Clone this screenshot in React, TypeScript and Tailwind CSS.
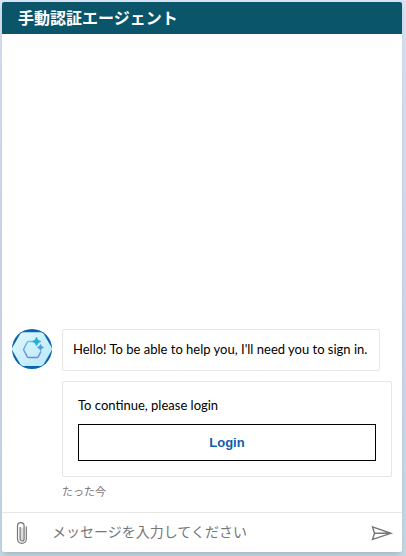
import React from "react";

function BotAvatar() {
  return (
    <svg className="size-10 shrink-0" viewBox="0 0 40 40" role="img" aria-label="Agent">
      <defs>
        <linearGradient id="hexFill" x1="0" y1="0" x2="1" y2="1">
          <stop offset="0" stopColor="#e2f7fd" />
          <stop offset="1" stopColor="#b5e9f8" />
        </linearGradient>
        <linearGradient id="hexLine" x1="0" y1="0" x2="0" y2="1">
          <stop offset="0" stopColor="#5cc8ea" />
          <stop offset="1" stopColor="#7f7fdc" />
        </linearGradient>
        <clipPath id="disc">
          <circle cx="20" cy="20" r="20" />
        </clipPath>
      </defs>
      <g clipPath="url(#disc)">
        <rect width="40" height="40" fill="#0863b3" />
        <path
          d="M11.500 3.200h17q2.200 0 3.300 1.900L39.500 18.300q1 1.700 0 3.400L31.800 35q-1.100 1.900-3.300 1.900h-17Q9.300 36.900 8.200 35L.5 21.700q-1-1.700 0-3.400L8.200 5.100q1.100-1.900 3.300-1.900z"
          fill="url(#hexFill)"
        />
      </g>
      <path
        d="M20.500 12.500h-4q-.8 0-1.200.7L11.800 19.800q-.4.700 0 1.400l3.500 6.600q.4.700 1.200.7h8.500q.8 0 1.200-.7l2.800-5.500"
        fill="none"
        stroke="url(#hexLine)"
        strokeWidth="1.500"
      />
      <path d="M24.500 8.200q.7 3.600 4.300 4.300-3.600.7-4.300 4.300-.7-3.600-4.300-4.300 3.600-.7 4.300-4.300z" fill="#20aee0" stroke="#20aee0" strokeWidth=".8" />
      <path d="M28.500 15.300q.5 2.700 3.200 3.200-2.700.5-3.200 3.200-.5-2.700-3.200-3.200 2.700-.5 3.200-3.200z" fill="#4b9be0" stroke="#4b9be0" strokeWidth=".6" />
    </svg>
  );
}

function PaperclipIcon() {
  return (
    <svg className="h-6 w-3" viewBox="0 0 12 24" fill="none" stroke="#767676" strokeWidth="1.200" aria-hidden="true">
      <path d="M4 6.500h4v11a2 2 0 0 1-4 0z" fill="#dddddd" stroke="none" />
      <path d="M10.300 5.500v12.500a4.400 4.400 0 0 1-8.800 0V5a3.300 3.300 0 0 1 6.600 0v13a2 2 0 0 1-4 0V6" />
    </svg>
  );
}

function SendIcon() {
  return (
    <svg className="h-4 w-6" viewBox="0 0 24 16" fill="none" stroke="#767676" strokeWidth="1.400" aria-hidden="true">
      <path d="M2.500 1.800L21 8.300 2.500 14.500 4.500 8.300zM4.500 8.300H21" />
    </svg>
  );
}

export default function App() {
  return (
    <div className="flex h-screen bg-linear-to-b from-[#d7e2f2] via-[#ced9ec] to-[#c3d8e5] pt-0.5 pr-1 pb-1 pl-0.5 font-['Lato','Noto_Sans_CJK_JP',sans-serif]">
      <main className="flex min-w-0 flex-1 flex-col overflow-hidden rounded-xs bg-white shadow-md">
        <header className="flex h-8 shrink-0 items-center bg-[#0b556a] px-4 pb-0.5">
          <h1 className="font-['Noto_Sans_CJK_JP',sans-serif] text-base font-bold text-white">手動認証エージェント</h1>
        </header>
        <section className="flex flex-1 flex-col justify-end overflow-y-auto px-2.5 pb-[13px] text-[13px] leading-[18px] text-black">
          <div className="flex items-start gap-2.5">
            <BotAvatar />
            <p className="rounded-xs border border-[#e6e6e6] pt-2.5 pr-3 pb-3 pl-2.5 whitespace-nowrap">
              Hello! To be able to help you, I'll need you to sign in.
            </p>
          </div>
          <div className="mt-2.5 ml-[50px] rounded-xs border border-[#e6e6e6] px-[15px] pt-3.5 pb-[15px]">
            <p className="mb-2.5">To continue, please login</p>
            <button type="button" className="block h-[37px] w-full border border-black bg-white font-['Liberation_Sans',sans-serif] font-bold text-[#0b5fad]">
              Login
            </button>
          </div>
          <time className="mt-1.5 ml-[50px] font-['Noto_Sans_CJK_JP',sans-serif] text-[11px] leading-4 text-[#767676]">たった今</time>
        </section>
        <form className="flex h-10 shrink-0 items-center border-t border-[#e6e6e6]" onSubmit={(e) => e.preventDefault()}>
          <button type="button" aria-label="ファイルを添付" className="flex h-full w-10 items-center justify-center">
            <PaperclipIcon />
          </button>
          <input
            type="text"
            aria-label="メッセージを入力してください"
            placeholder="メッセージを入力してください"
            className="h-full min-w-0 flex-1 px-2.5 pb-1 font-['Noto_Sans_CJK_JP',sans-serif] text-sm text-black outline-none placeholder:text-[#767676]"
          />
          <button type="submit" aria-label="送信" className="flex h-full w-10 items-center justify-center">
            <SendIcon />
          </button>
        </form>
      </main>
    </div>
  );
}
